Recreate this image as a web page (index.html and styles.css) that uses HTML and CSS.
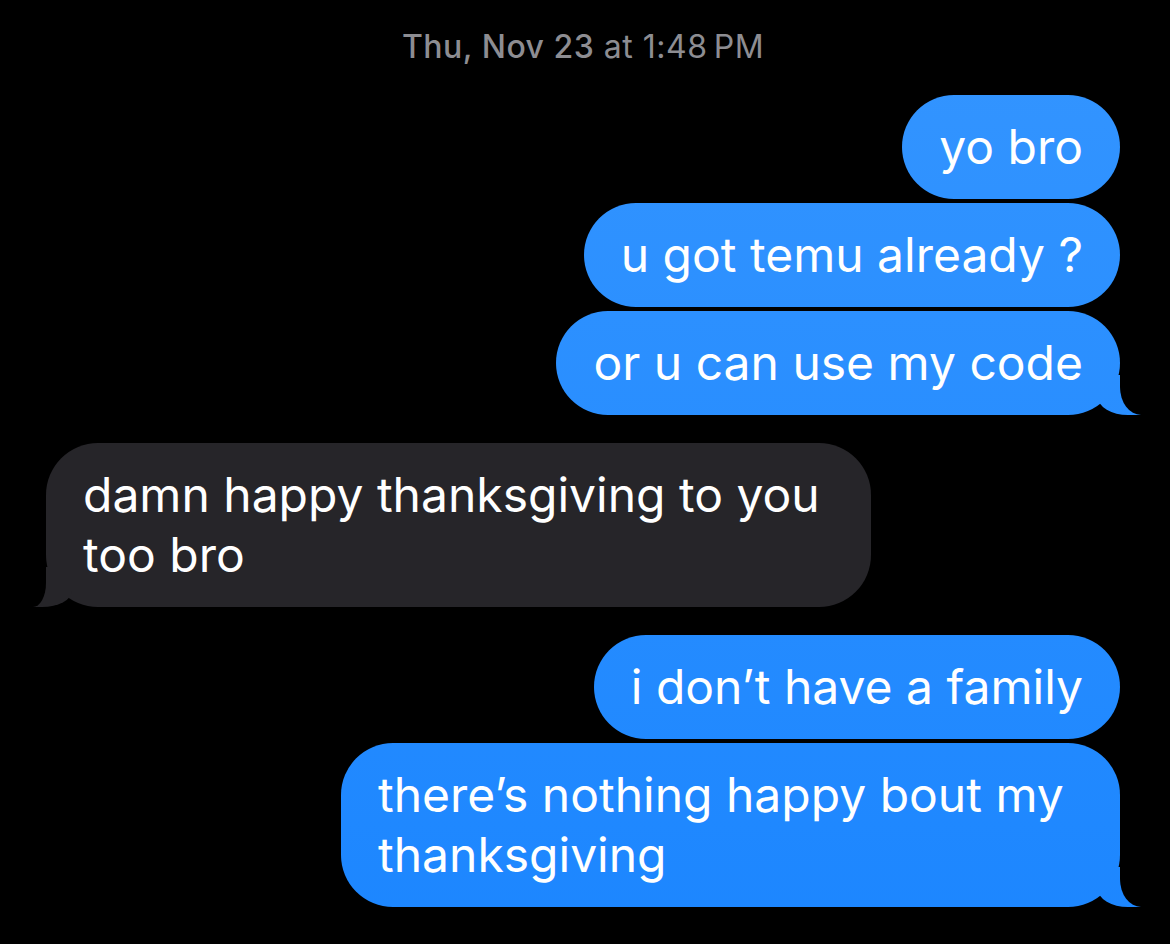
FILE: index.html
```html
<!DOCTYPE html>
<html lang="en">
<head>
  <meta charset="UTF-8" />
  <meta name="viewport" content="width=device-width, initial-scale=1.0" />
  <title>Messages</title>
  <link rel="stylesheet" href="styles.css">
</head>
<body>
  <div class="thread">
    <p class="stamp"><span class="day">Thu, Nov 23</span> at 1:48&#8239;PM</p>

    <div class="group out">
      <div class="bubble">yo bro</div>
      <div class="bubble">u got temu already ?</div>
      <div class="bubble tail">or u can use my code</div>
    </div>

    <div class="group in">
      <div class="bubble tail">damn happy thanksgiving to you too bro</div>
    </div>

    <div class="group out">
      <div class="bubble">i don’t have a family</div>
      <div class="bubble tail">there’s nothing happy bout my thanksgiving</div>
    </div>
  </div>
</body>
</html>
```

FILE: styles.css
```css
body {
  margin: 0;
  background-color: #000;
  color: #fff;
  font-family: Inter, "Liberation Sans", sans-serif;
}

.thread {
  padding: 0 50px 0 46px;
}

.stamp {
  margin: 0 0 28px;
  padding-top: 27px;
  line-height: 40px;
  font-size: 32px;
  letter-spacing: 0.5px;
  color: #8d8d92;
  text-align: center;
}

.stamp .day {
  font-weight: 500;
}

.group {
  display: flex;
  flex-direction: column;
  gap: 4px;
}

.group + .group {
  margin-top: 28px;
}

.out {
  align-items: flex-end;
}

.in {
  align-items: flex-start;
}

.bubble {
  position: relative;
  padding: 22px 37px;
  font-size: 48px;
  line-height: 60px;
  border-radius: 52px;
}

.out .bubble {
  max-width: 705px;
  background: linear-gradient(#3495ff, #1c86ff) fixed;
}

.in .bubble {
  max-width: 751px;
  background-color: #262529;
}

/* tails */
.tail::before,
.tail::after {
  content: "";
  position: absolute;
  bottom: 0;
  height: 40px;
}

.tail::before {
  background: inherit;
}

.tail::after {
  width: 40px;
  background-color: #000;
}

.out .tail::before {
  right: -22px;
  width: 44px;
  border-bottom-left-radius: 30px 18px;
}

.out .tail::after {
  right: -40px;
  border-bottom-left-radius: 21px 28px;
}

.in .tail::before {
  left: -14px;
  width: 40px;
  border-bottom-right-radius: 30px 16px;
}

.in .tail::after {
  left: -40px;
  border-bottom-right-radius: 13px 24px;
}
```
